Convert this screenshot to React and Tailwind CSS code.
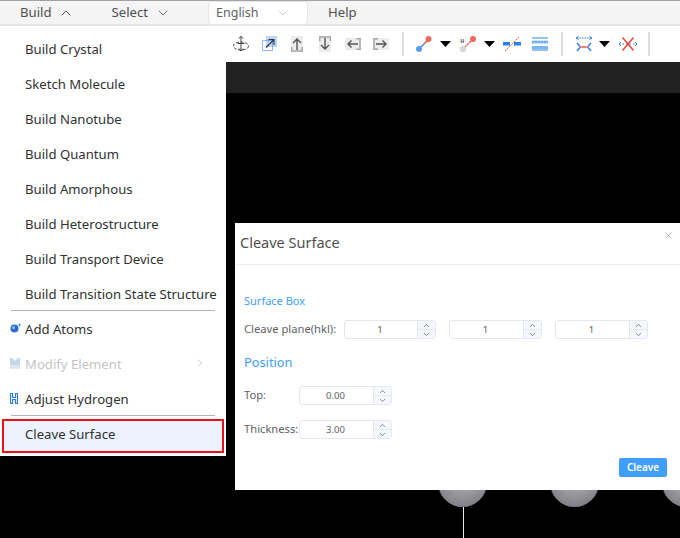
import { ChevronUp, ChevronDown, ChevronRight, X } from 'lucide-react';

const Caret = () => (
    <svg width="11" height="6" viewBox="0 0 11 6" className="shrink-0"><path d="M0 0h11L5.500 6z" fill="#000" /></svg>
);

const Sep = ({ className }) => <div className={`w-[2px] h-6 bg-[#dcdcdc] ${className}`} />;

const RotateIcon = () => (
    <svg width="18" height="18" viewBox="0 0 18 18" fill="none" stroke="#444" strokeWidth="1">
        <ellipse cx="9" cy="11" rx="7.500" ry="4" strokeDasharray="3 1.500" />
        <path d="M9 1.500v14M6.800 3.500 9 1.200 11.200 3.500M5.500 8.500h7M6.800 13.500 9 16 11.200 13.500" />
    </svg>
);

const ExpandIcon = () => (
    <svg width="16" height="16" viewBox="0 0 16 16" fill="none">
        <rect x="4" y="0" width="11" height="11" fill="#bcd7f5" />
        <rect x="0.500" y="4.500" width="10" height="10" stroke="#2a7de1" strokeDasharray="1 1" />
        <path d="M4 11.500 12 3.500M6.500 3.500H12V9" stroke="#333" strokeWidth="1.100" />
    </svg>
);

const MoveIcon = ({ d, bars }) => (
    <svg width="12" height="16" viewBox="0 0 12 16" fill="none">
        <rect x="0" y="0" width="12" height="16" fill="#ebebeb" />
        <path d={bars} stroke="#a8a8a8" strokeWidth="1.500" />
        <path d={d} stroke="#555" strokeWidth="1.400" />
    </svg>
);

const ArrowBoxIcon = ({ d, bars }) => (
    <svg width="16" height="12" viewBox="0 0 16 12" fill="none">
        <rect x="0" y="0" width="16" height="12" fill="#ebebeb" />
        <path d={bars} stroke="#a8a8a8" strokeWidth="1.500" />
        <path d={d} stroke="#555" strokeWidth="1.400" />
    </svg>
);

const BondIcon = () => (
    <svg width="18" height="18" viewBox="0 0 18 18">
        <path d="M5 13 9 9" stroke="#3a86e8" strokeWidth="1.500" />
        <path d="M9 9 13 5" stroke="#e8503a" strokeWidth="1.500" />
        <circle cx="13.500" cy="4" r="3" fill="#f0695a" />
        <circle cx="4" cy="14" r="3" fill="#5b9cf0" />
    </svg>
);

const HydrogenBondIcon = () => (
    <svg width="18" height="18" viewBox="0 0 18 18">
        <path d="M6 12 13 5" stroke="#e8503a" strokeWidth="1.500" strokeDasharray="2 1" />
        <circle cx="14" cy="4" r="3" fill="#f0695a" />
        <circle cx="4" cy="14" r="3.200" fill="#d8d8d8" />
        <text x="1.500" y="8" fontSize="5" fill="#444" fontWeight="bold" fontFamily="Liberation Sans">H</text>
    </svg>
);

const CutBondIcon = () => (
    <svg width="18" height="16" viewBox="0 0 18 16">
        <rect x="0" y="6" width="7" height="3.500" fill="#2a82e6" />
        <rect x="11" y="6" width="7" height="3.500" fill="#2a82e6" />
        <path d="M2 15 16 1" stroke="#e8503a" strokeWidth="1" strokeDasharray="2 1" />
    </svg>
);

const LayersIcon = () => (
    <svg width="16" height="14" viewBox="0 0 16 14" fill="none">
        <path d="M0 1h16M0 13h16" stroke="#2a82e6" strokeWidth="1.200" />
        <rect x="0" y="3.500" width="16" height="3" fill="#9ccbf6" />
        <rect x="0" y="9" width="16" height="3" fill="#7ab6f2" />
        <path d="M0 5h16" stroke="#2a82e6" strokeDasharray="2 1" />
    </svg>
);

const StretchIcon = () => (
    <svg width="18" height="16" viewBox="0 0 18 16" fill="none">
        <path d="M2 2h14" stroke="#2a82e6" strokeDasharray="1.500 1" />
        <path d="M3.500 0.500 1 2l2.500 1.500M14.500 0.500 17 2l-2.500 1.500" stroke="#2a82e6" />
        <path d="M2 7l3 3.500M16 7l-3 3.500M2 15l3-3.500M16 15l-3-3.500" stroke="#2a82e6" strokeWidth="1.500" />
        <path d="M5 11h8" stroke="#e8432a" strokeWidth="1.300" />
    </svg>
);

const CrossIcon = () => (
    <svg width="18" height="16" viewBox="0 0 18 16" fill="none">
        <path d="M0 8h18" stroke="#2a82e6" strokeDasharray="1.500 2" />
        <path d="M2 6 0 8l2 2M16 6l2 2-2 2" stroke="#2a82e6" />
        <path d="M3.500 1.500 14.500 14.500M14.500 1.500 3.500 14.500" stroke="#e8432a" strokeWidth="1.400" />
    </svg>
);

const AtomIcon = () => (
    <svg width="11" height="10" viewBox="0 0 11 10">
        <circle cx="4.500" cy="5.500" r="4" fill="#2a6fd0" />
        <circle cx="3.500" cy="4.500" r="1.500" fill="#8dbdf0" />
        <path d="M8 2h3M9.500 0.500v3" stroke="#2a82e6" strokeWidth="0.800" />
    </svg>
);

const ModifyIcon = () => (
    <svg width="10" height="11" viewBox="0 0 10 11">
        <path d="M0 0h2l3 3 3-3h2v7H0z" fill="#c3d7e6" />
        <rect x="0" y="7" width="10" height="4" fill="#dbe8f2" />
    </svg>
);

const HIcon = () => (
    <svg width="8" height="11" viewBox="0 0 8 11" fill="none" stroke="#2a82e6" strokeWidth="1.200">
        <path d="M0.600 0.500h2v4h3v-4h2v10h-2v-4h-3v4h-2z" />
    </svg>
);

const plainItems = ['Build Crystal', 'Sketch Molecule', 'Build Nanotube', 'Build Quantum', 'Build Amorphous', 'Build Heterostructure', 'Build Transport Device', 'Build Transition State Structure'];

const MenuItem = ({ icon, children, disabled, arrow }) => (
    <div className={`relative h-[35px] flex items-center pl-[25px] pt-[2px] whitespace-nowrap ${disabled ? 'text-[#c4c4c4]' : 'text-[#303133]'}`}>
        {icon && <span className="absolute left-[10px] top-[12px] flex">{icon}</span>}
        {children}
        {arrow && <ChevronRight className="absolute right-[20px] top-[11px] w-3 h-3 text-[#c0c4cc]" />}
    </div>
);

const Spinner = ({ value, className }) => (
    <div className={`flex h-[19px] border border-[#e4e7ed] rounded-[3px] bg-white ${className}`}>
        <div className="flex-1 pr-[2px] text-center text-[9.500px] leading-[17px] text-[#606266]">{value}</div>
        <div className="w-[18px] flex flex-col border-l border-[#e4e7ed] bg-[#f5f7fa]">
            <div className="h-[9px] flex items-center justify-center border-b border-[#e4e7ed]"><ChevronUp className="w-[9px] h-[9px] text-[#606266]" /></div>
            <div className="h-[8px] flex items-center justify-center"><ChevronDown className="w-[9px] h-[9px] text-[#606266]" /></div>
        </div>
    </div>
);

const Ball = ({ className }) => (
    <div className={`absolute top-[458px] w-[49px] h-[49px] rounded-full bg-[radial-gradient(circle_at_50%_40%,#b8b8bc,#6e6e74)] ${className}`} />
);

export default function App() {
    return (
        <div className="relative w-[680px] h-[538px] overflow-hidden bg-black text-[13.150px] font-['Noto_Sans','Liberation_Sans',sans-serif]">
            {/* top menu */}
            <div className="h-[26px] flex items-center bg-[#f4f4f4] border-t border-t-[#a3a3a3] border-b-2 border-b-[#e6e6e6] text-[#505050]">
                <span className="ml-[20px]">Build</span>
                <ChevronUp className="ml-[6px] w-4 h-4" strokeWidth={1.500} />
                <span className="ml-[38px]">Select</span>
                <ChevronDown className="ml-[7px] w-4 h-4 text-[#707070]" strokeWidth={1.500} />
                <div className="ml-[37px] w-[100px] h-[24px] flex items-center justify-between pl-[7px] pr-2 pt-px border border-[#e4e7ed] rounded bg-white text-[#606266] text-[12.500px]">
                    English
                    <ChevronDown className="mr-[8px] w-4 h-4 text-[#c0c4cc]" strokeWidth={1.200} />
                </div>
                <span className="ml-[20px]">Help</span>
            </div>

            {/* toolbar */}
            <div className="h-[36px] flex items-center bg-white pl-[232px]">
                <RotateIcon />
                <div className="ml-[12px]"><ExpandIcon /></div>
                <div className="ml-[13px]"><MoveIcon bars="M0 15h12M.7 16v-5M11.300 16v-5" d="M6 14V3M2 7l4-4 4 4" /></div>
                <div className="ml-[16px]"><MoveIcon bars="M0 1h12M.7 0v5M11.300 0v5" d="M6 2v11M2 9l4 4 4-4" /></div>
                <div className="ml-[14px]"><ArrowBoxIcon bars="M15 0v12M11 .7h5M11 11.300h5" d="M13 6H3M6.500 2.500 3 6l3.500 3.500" /></div>
                <div className="ml-[12px]"><ArrowBoxIcon bars="M1 0v12M0 .7h5M0 11.300h5" d="M3 6h10M9.500 2.500 13 6l-3.500 3.500" /></div>
                <Sep className="ml-[13px]" />
                <div className="ml-[11px]"><BondIcon /></div>
                <div className="ml-[7px]"><Caret /></div>
                <div className="ml-[8px]"><HydrogenBondIcon /></div>
                <div className="ml-[7px]"><Caret /></div>
                <div className="ml-[8px]"><CutBondIcon /></div>
                <div className="ml-[11px]"><LayersIcon /></div>
                <Sep className="ml-[13px]" />
                <div className="ml-[12px]"><StretchIcon /></div>
                <div className="ml-[6px]"><Caret /></div>
                <div className="ml-[9px]"><CrossIcon /></div>
                <Sep className="ml-[11px]" />
            </div>

            {/* dark strip */}
            <div className="h-[31px] bg-[#222222]" />

            {/* molecule canvas */}
            <Ball className="left-[438px]" />
            <Ball className="left-[550px]" />
            <Ball className="left-[662px]" />
            <div className="absolute left-[463px] top-[507px] w-px h-[31px] bg-[#e8e8e8]" />

            {/* open Build menu */}
            <div className="absolute left-0 top-[31px] w-[226px] h-[425px] bg-white">
                {plainItems.map((item) => <MenuItem key={item}>{item}</MenuItem>)}
                <div className="relative -mt-px mx-[11px] h-px bg-[#b5b5b5]" />
                <MenuItem icon={<AtomIcon />}>Add Atoms</MenuItem>
                <MenuItem icon={<ModifyIcon />} disabled arrow>Modify Element</MenuItem>
                <MenuItem icon={<HIcon />}>Adjust Hydrogen</MenuItem>
                <div className="relative -mt-px mx-[11px] h-px bg-[#b5b5b5]" />
                <div className="mx-[2px] mt-[3px] h-[34px] flex items-center pl-[21px] pb-[2px] bg-[#ecf3fd] border-2 border-[#e8101c] text-[#303133]">Cleave Surface</div>
            </div>

            {/* dialog */}
            <div className="absolute left-[235px] top-[223px] w-[445px] h-[267px] bg-white flex flex-col text-[#606266]">
                <div className="relative h-[42px] shrink-0 flex items-center pl-[5px] pb-[2px] border-b border-[#ebeef5] text-[#505050] text-[14.500px]">
                    Cleave Surface
                    <X className="absolute right-[6px] top-[7px] w-[11px] h-[11px] text-[#909399]" strokeWidth={1.500} />
                </div>
                <div className="pl-[9px] mt-[28px] text-[#409eff] text-[11px] leading-[16px]">Surface Box</div>
                <div className="flex items-center pl-[9px] mt-[11px] text-[11.200px]">
                    <span className="w-[100px]">Cleave plane(hkl):</span>
                    <Spinner value="1" className="w-[92px]" />
                    <Spinner value="1" className="ml-[13px] w-[93px]" />
                    <Spinner value="1" className="ml-[13px] w-[93px]" />
                </div>
                <div className="pl-[9px] mt-[13px] text-[#409eff] text-[12.800px] leading-[20px]">Position</div>
                <div className="flex items-center pl-[9px] mt-[14px] text-[11.200px]">
                    <span className="w-[55px]">Top:</span>
                    <Spinner value="0.00" className="w-[93px]" />
                </div>
                <div className="flex items-center pl-[9px] mt-[15px] text-[11.200px]">
                    <span className="w-[55px]">Thickness:</span>
                    <Spinner value="3.00" className="w-[93px]" />
                </div>
                <div className="flex justify-end mt-[19px] pr-[13px]">
                    <div className="w-[48px] h-[19px] rounded-[2px] bg-[#409eff] text-white text-[10px] font-semibold leading-[19px] text-center">Cleave</div>
                </div>
            </div>
        </div>
    );
}
